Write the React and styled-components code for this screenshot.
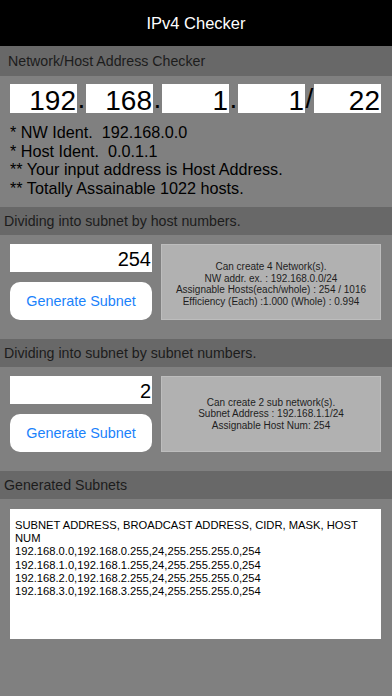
import React from 'react'
import styled, { createGlobalStyle } from 'styled-components'

const GlobalStyle = createGlobalStyle`
  html, body {
    margin: 0;
    padding: 0;
    background: #808080;
  }
  body {
    font-family: "Liberation Sans", Arial, sans-serif;
  }
`

const Screen = styled.div`
  width: 392px;
  height: 696px;
  background: #808080;
  overflow: hidden;
`

const NavBar = styled.div`
  height: 46px;
  background: #000;
  color: #fff;
  font-size: 16.5px;
  display: flex;
  align-items: center;
  justify-content: center;
`

const SectionHeader = styled.div`
  height: ${({ tall }) => (tall ? '30px' : '28px')};
  background: #686868;
  color: #1c1c1c;
  font-size: 14.2px;
  display: flex;
  align-items: center;
  padding-left: ${({ indent }) => indent || 4}px;
  margin-top: ${({ gap }) => gap || 0}px;
`

const AddressRow = styled.div`
  display: flex;
  align-items: flex-end;
  padding: 8px 10px 0 10px;
`

const OctetBox = styled.div`
  width: 67px;
  height: 29px;
  background: #fff;
  color: #000;
  font-size: 28px;
  line-height: 29px;
  padding-top: 2px;
  text-align: right;
  padding-right: 1px;
  box-sizing: border-box;
`

const Sep = styled.span`
  width: 9px;
  font-size: 28px;
  line-height: 29px;
  color: #000;
  text-align: center;
`

const InfoLines = styled.div`
  padding: 10px 0 0 10px;
  color: #000;
  font-size: 16.2px;
  line-height: 18.6px;
  height: 84px;
`

const SplitRow = styled.div`
  display: flex;
  gap: 9px;
  padding: 9px 11px 0 10px;
  height: 76px;
`

const LeftCol = styled.div`
  width: 142px;
  display: flex;
  flex-direction: column;
  gap: 10px;
`

const NumberBox = styled.div`
  height: 28px;
  background: #fff;
  color: #000;
  font-size: 20px;
  line-height: 30px;
  text-align: right;
  padding-right: 1px;
`

const GenButton = styled.button`
  height: 38px;
  border: 0;
  border-radius: 10px;
  background: #fff;
  color: #1a82fb;
  font-family: "Liberation Sans", Arial, sans-serif;
  font-size: 14.4px;
  padding: 0;
  cursor: pointer;
`

const ResultBox = styled.div`
  flex: 1;
  background: #b1b1b1;
  border: 1px solid #bdbdbd;
  color: #1e1e1e;
  font-size: 10px;
  line-height: 11.5px;
  text-align: center;
  display: flex;
  flex-direction: column;
  justify-content: center;
  padding-top: ${({ shift }) => shift || 0}px;
  box-sizing: border-box;
`

const ListArea = styled.div`
  margin: 10px 11px 0 10px;
  height: 130px;
  background: #fff;
  color: #000;
  font-size: 11.2px;
  line-height: 13.2px;
  padding: 10px 8px 0 5px;
  box-sizing: border-box;
  white-space: pre-wrap;
`

const subnets = [
  '192.168.0.0,192.168.0.255,24,255.255.255.0,254',
  '192.168.1.0,192.168.1.255,24,255.255.255.0,254',
  '192.168.2.0,192.168.2.255,24,255.255.255.0,254',
  '192.168.3.0,192.168.3.255,24,255.255.255.0,254',
]

export default function App() {
  return (
    <Screen>
      <GlobalStyle />
      <NavBar>IPv4 Checker</NavBar>
      <SectionHeader tall indent={8}>Network/Host Address Checker</SectionHeader>

      <AddressRow>
        <OctetBox>192</OctetBox>
        <Sep>.</Sep>
        <OctetBox>168</OctetBox>
        <Sep>.</Sep>
        <OctetBox>1</OctetBox>
        <Sep>.</Sep>
        <OctetBox>1</OctetBox>
        <Sep>/</Sep>
        <OctetBox>22</OctetBox>
      </AddressRow>

      <InfoLines>
        <div>* NW Ident.&nbsp; 192.168.0.0</div>
        <div>* Host Ident.&nbsp; 0.0.1.1</div>
        <div>** Your input address is Host Address.</div>
        <div>** Totally Assainable 1022 hosts.</div>
      </InfoLines>

      <SectionHeader>Dividing into subnet by host numbers.</SectionHeader>
      <SplitRow>
        <LeftCol>
          <NumberBox>254</NumberBox>
          <GenButton>Generate Subnet</GenButton>
        </LeftCol>
        <ResultBox shift={4}>
          <div>Can create 4 Network(s).</div>
          <div>NW addr. ex. : 192.168.0.0/24</div>
          <div>Assignable Hosts(each/whole) : 254 / 1016</div>
          <div>Efficiency (Each) :1.000 (Whole) : 0.994</div>
        </ResultBox>
      </SplitRow>

      <SectionHeader gap={19}>Dividing into subnet by subnet numbers.</SectionHeader>
      <SplitRow>
        <LeftCol>
          <NumberBox>2</NumberBox>
          <GenButton>Generate Subnet</GenButton>
        </LeftCol>
        <ResultBox>
          <div>Can create 2 sub network(s).</div>
          <div>Subnet Address : 192.168.1.1/24</div>
          <div>Assignable Host Num: 254</div>
        </ResultBox>
      </SplitRow>

      <SectionHeader gap={19}>Generated Subnets</SectionHeader>
      <ListArea>
        {'SUBNET ADDRESS, BROADCAST ADDRESS, CIDR, MASK, HOST NUM\n'}
        {subnets.join('\n')}
      </ListArea>
    </Screen>
  )
}
